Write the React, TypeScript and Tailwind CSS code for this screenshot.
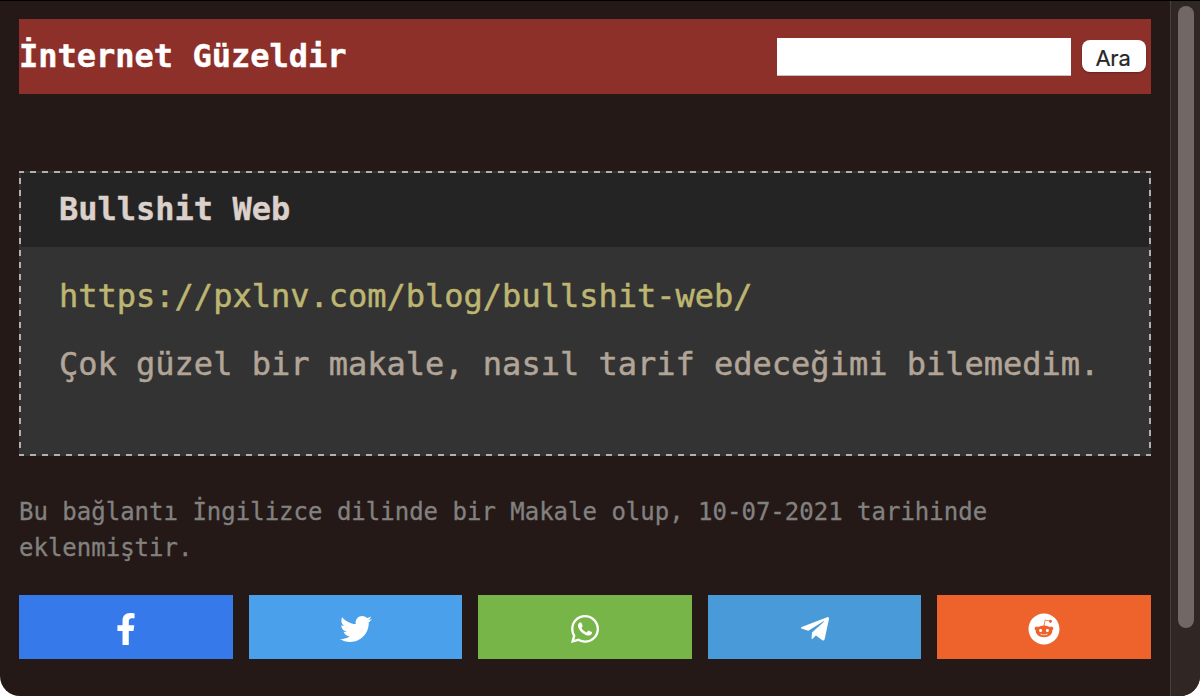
import React from "react";
import { FaFacebookF, FaTwitter, FaWhatsapp, FaTelegramPlane, FaReddit } from "react-icons/fa";

const shares = [
  { name: "Facebook", Icon: FaFacebookF, color: "bg-[#3579ea]" },
  { name: "Twitter", Icon: FaTwitter, color: "bg-[#4aa0eb] pl-px" },
  { name: "WhatsApp", Icon: FaWhatsapp, color: "bg-[#78b548]" },
  { name: "Telegram", Icon: FaTelegramPlane, color: "bg-[#489bd8]" },
  { name: "Reddit", Icon: FaReddit, color: "bg-[#ed632b]" },
];

// Even 6px dashes on all four edges, drawn as repeating background tiles.
const dashedFrame =
  "bg-[#333333] p-[2px] [background-image:linear-gradient(90deg,#b0b0b0_50%,transparent_50%),linear-gradient(90deg,#b0b0b0_50%,transparent_50%),linear-gradient(#b0b0b0_50%,transparent_50%),linear-gradient(#b0b0b0_50%,transparent_50%)] [background-size:12px_2px,12px_2px,2px_12px,2px_12px] [background-position:-1px_0,-1px_100%,0_-5px,100%_-5px] [background-repeat:repeat-x,repeat-x,repeat-y,repeat-y]";

export default function App() {
  return (
    <div className="h-[696px] w-[1200px] overflow-hidden bg-white">
      <div className="flex h-full overflow-hidden rounded-b-[20px] border-t border-black bg-[#241917] font-['DejaVu_Sans_Mono',monospace]">
        <div className="flex min-w-0 flex-1 flex-col px-[19px] pt-[18px]">
          <header className="flex h-[75px] shrink-0 items-start justify-between bg-[#8e302a]">
            <h1 className="pt-[13px] text-[32px] leading-[48px] font-bold text-white [-webkit-text-stroke:0.4px]">
              İnternet Güzeldir
            </h1>
            <form className="flex gap-[11px] pt-[19px] pr-[5px]" onSubmit={(e) => e.preventDefault()}>
              <input
                aria-label="Ara"
                className="h-[38px] w-[294px] border-b border-[#c9c0bf] bg-white outline-none"
              />
              <button className="mt-[2px] h-8 w-16 rounded-[8px] bg-white pt-[4px] pr-[2px] font-[Inter,sans-serif] text-[22px] leading-7 tracking-[-0.2px] text-[#272727] shadow-[0_1px_2px_rgba(0,0,0,0.3)] [-webkit-text-stroke:0.2px]">
                Ara
              </button>
            </form>
          </header>

          <article className={`mt-[77px] h-[285px] shrink-0 ${dashedFrame}`}>
            <h2 className="h-[74px] bg-[#242424] pt-[12px] pl-[38px] text-[32px] leading-[48px] font-bold text-[#dbd1ca] [-webkit-text-stroke:0.4px]">
              Bullshit Web
            </h2>
            <div className="pt-[25px] pl-[38px] text-[32px] leading-[48px] whitespace-nowrap [-webkit-text-stroke:0.5px]">
              <a className="block text-[#bdb672]">https://pxlnv.com/blog/bullshit-web/</a>
              <p className="mt-5 text-[#b2a598]">Çok güzel bir makale, nasıl tarif edeceğimi bilemedim.</p>
            </div>
          </article>

          <p className="mt-[38px] text-2xl leading-9 text-[#828180] [-webkit-text-stroke:0.3px]">
            Bu bağlantı İngilizce dilinde bir Makale olup, 10-07-2021 tarihinde eklenmiştir.
          </p>

          <nav className="mt-[29px] grid grid-cols-5 gap-4">
            {shares.map(({ name, Icon, color }) => (
              <a key={name} aria-label={name} className={`flex h-16 items-center justify-center pt-[4px] text-white ${color}`}>
                <Icon size={32} />
              </a>
            ))}
          </nav>
        </div>
        <div className="flex w-[30px] shrink-0 justify-center border-l border-[#483e3c] bg-[#302624] pt-[5px]">
          <div className="h-[622px] w-4 rounded-full bg-[#716765]" />
        </div>
      </div>
    </div>
  );
}
